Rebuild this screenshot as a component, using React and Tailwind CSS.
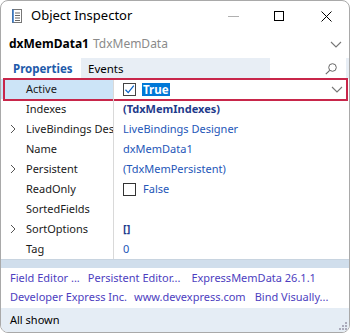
const font = { fontFamily: '"Noto Sans", "Open Sans", sans-serif' };

const Chevron = ({ className = '' }) => (
    <svg width="6" height="10" viewBox="0 0 6 10" className={className}>
        <path d="M1 1 L5 5 L1 9" fill="none" stroke="#555" strokeWidth="1" />
    </svg>
);

const Down = ({ className = '' }) => (
    <svg width="12" height="7" viewBox="0 0 12 7" className={className}>
        <path d="M1 1 L6 6 L11 1" fill="none" stroke="#777" strokeWidth="1.1" />
    </svg>
);

const rows = [
    { name: 'Indexes', value: '(TdxMemIndexes)', cls: 'font-bold text-[#1f3b8c]' },
    { name: 'LiveBindings Designer', value: 'LiveBindings Designer', cls: 'text-[#2456b8]', expand: true },
    { name: 'Name', value: 'dxMemData1', cls: 'text-[#2456b8]' },
    { name: 'Persistent', value: '(TdxMemPersistent)', cls: 'text-[#2456b8]', expand: true },
    { name: 'ReadOnly', value: 'False', cls: 'text-[#2456b8]', check: true },
    { name: 'SortedFields', value: '', cls: '' },
    { name: 'SortOptions', value: '[]', cls: 'font-bold text-[#1f3b8c]', expand: true },
    { name: 'Tag', value: '0', cls: 'text-[#2456b8]' },
];

export default function App() {
    return (
        <div style={font} className="w-[350px] h-[333px] bg-white border border-[#a9a9a9] rounded-lg overflow-hidden flex flex-col text-[11px] text-[#1a1a1a]">
            {/* title bar */}
            <div className="h-[30px] flex items-center shrink-0">
                <svg width="10" height="14" viewBox="0 0 10 14" className="ml-[11px]">
                    <rect x="0.5" y="0.5" width="9" height="13" fill="white" stroke="#777" />
                    <line x1="1" y1="0.5" x2="1" y2="13.5" stroke="#2b73c9" strokeWidth="1.5" />
                    <line x1="3" y1="4" x2="8" y2="4" stroke="#666" />
                    <line x1="3" y1="6.5" x2="8" y2="6.5" stroke="#666" />
                    <line x1="3" y1="9" x2="8" y2="9" stroke="#666" />
                    <line x1="3" y1="11.5" x2="8" y2="11.5" stroke="#666" />
                </svg>
                <span className="ml-[9px] text-[13px] text-black">Object Inspector</span>
                <div className="ml-auto flex items-center">
                    <div className="w-[11px] h-px bg-[#b0b0b0] mr-[35px]"></div>
                    <div className="w-[10px] h-[10px] border border-black mr-[37px]"></div>
                    <svg width="11" height="11" viewBox="0 0 11 11" className="mr-[17px]">
                        <path d="M0.5 0.5 L10.5 10.5 M10.5 0.5 L0.5 10.5" stroke="black" strokeWidth="1" />
                    </svg>
                </div>
            </div>
            {/* component selector */}
            <div className="h-[26px] flex items-center shrink-0 pl-[8px] pr-[7px]">
                <span className="font-bold text-[12px] text-black">dxMemData1</span>
                <span className="ml-[4px] text-[12px] text-[#8a8a8a]">TdxMemData</span>
                <Down className="ml-auto" />
            </div>
            {/* tabs */}
            <div className="h-[21px] mt-[1px] flex bg-[#e8eef5] shrink-0">
                <div className="w-[80px] bg-white flex items-center pl-[12px] font-bold text-[11.5px] text-[#1e5aaa]">Properties</div>
                <div className="flex items-center pl-[7px] text-[11.5px] text-black">Events</div>
                <div className="ml-auto w-[76px] mr-[3px] bg-white flex items-center justify-end pr-[9px]">
                    <svg width="12" height="12" viewBox="0 0 12 12">
                        <circle cx="7.5" cy="4.5" r="3.8" fill="none" stroke="#666" strokeWidth="1" />
                        <path d="M4.7 7.3 L0.8 11.2" stroke="#666" strokeWidth="1.1" />
                    </svg>
                </div>
            </div>
            {/* grid */}
            <div className="flex flex-col shrink-0">
                <div className="relative h-[20px] flex">
                    <div className="w-[113px] bg-[#cce4f7] flex items-center pl-[25px] border-r border-[#d9d9d9]">Active</div>
                    <div className="flex-1 flex items-center pl-[9px]">
                        <div className="w-[13px] h-[13px] border border-[#444] bg-white">
                            <svg width="11" height="11" viewBox="0 0 11 11">
                                <path d="M1.5 5.8 L4.2 8.6 L9.8 1.6" fill="none" stroke="#0a64c8" strokeWidth="1.3" />
                            </svg>
                        </div>
                        <span className="ml-[6px] px-[1px] bg-[#0078d7] text-white font-bold text-[11.5px] leading-[13px]">True</span>
                        <Down className="ml-auto mr-[6px]" />
                    </div>
                    <div className="absolute left-[2px] right-[1px] top-[-1px] bottom-[-2px] border-2 border-[#c8264a] pointer-events-none"></div>
                </div>
                {rows.map((r) => (
                    <div key={r.name} className="h-[20px] flex">
                        <div className="w-[113px] relative flex items-center pl-[25px] border-r border-[#d9d9d9] overflow-hidden whitespace-nowrap">
                            {r.expand && <Chevron className="absolute left-[9px]" />}
                            {r.name}
                        </div>
                        <div className={`flex-1 flex items-center pl-[9px] whitespace-nowrap ${r.cls}`}>
                            {r.check && <div className="w-[13px] h-[13px] border border-[#333] mr-[7px]"></div>}
                            {r.value}
                        </div>
                    </div>
                ))}
            </div>
            <div className="h-[9px] bg-[#d0deec] border-t border-[#c8d4e0] shrink-0"></div>
            {/* footer links */}
            <div className="flex flex-col justify-center gap-[2px] h-[40px] pl-[9px] text-[#4d3ec0] shrink-0">
                <div className="flex gap-[8px] h-[17px] items-center">
                    <span>Field Editor ...</span>
                    <span>Persistent Editor...</span>
                    <span className="ml-[3px]">ExpressMemData 26.1.1</span>
                </div>
                <div className="flex gap-[8px] h-[17px] items-center">
                    <span>Developer Express Inc.</span>
                    <span className="-ml-[1px]">www.devexpress.com</span>
                    <span className="ml-[1px]">Bind Visually...</span>
                </div>
            </div>
            {/* status */}
            <div className="flex-1 bg-[#e5edf5] relative flex items-center pl-[9px] text-black">
                All shown
                <svg width="8" height="8" viewBox="0 0 8 8" className="absolute right-[2px] bottom-[2px]">
                    <rect x="6" y="0" width="2" height="2" fill="#aab" />
                    <rect x="3" y="3" width="2" height="2" fill="#aab" />
                    <rect x="6" y="3" width="2" height="2" fill="#aab" />
                    <rect x="0" y="6" width="2" height="2" fill="#aab" />
                    <rect x="3" y="6" width="2" height="2" fill="#aab" />
                    <rect x="6" y="6" width="2" height="2" fill="#aab" />
                </svg>
            </div>
        </div>
    );
}
